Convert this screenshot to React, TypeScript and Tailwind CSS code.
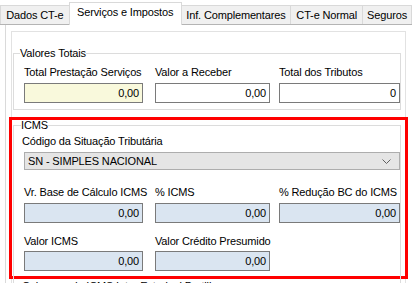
import React from "react";

const font = { fontFamily: '"Liberation Sans", Arial, sans-serif' };

function Tab({ label, active, w }: { label: string; active?: boolean; w: string }) {
  if (active) {
    return (
      <div
        className={`${w} h-[23px] -mb-[1px] -ml-[1px] bg-white border border-b-0 border-[#d9d9d9] pt-[3px] text-center whitespace-nowrap leading-[13px] relative z-10`}
      >
        {label}
      </div>
    );
  }
  return (
    <div
      className={`${w} h-[19px] bg-[#f0f0f0] border border-b-0 border-[#d9d9d9] -ml-[1px] first:ml-0 pt-[3px] text-center whitespace-nowrap leading-[13px]`}
    >
      {label}
    </div>
  );
}

function Field({
  label,
  value,
  bg,
  w,
  labelRight,
  gap = "mt-[4px]",
}: {
  label: string;
  value: string;
  bg: string;
  w: string;
  labelRight?: boolean;
  gap?: string;
}) {
  return (
    <div className={`${w} flex flex-col`}>
      <div className={`h-[13px] leading-[13px] whitespace-nowrap ${labelRight ? "text-right pr-[4px]" : ""}`}>
        {label}
      </div>
      <div
        className={`${gap} h-[20px] border border-[#7a7a7a] ${bg} text-right pr-[3px] leading-[18px]`}
      >
        {value}
      </div>
    </div>
  );
}

export default function App() {
  return (
    <div
      className="w-[412px] h-[283px] overflow-hidden bg-white text-black text-[11px] tracking-[-0.15px] relative"
      style={font}
    >
      {/* tabs */}
      <div className="flex items-end h-[25px] border-b border-[#b4b4b4]">
        <Tab label="Dados CT-e" w="w-[70px]" />
        <Tab label="Serviços e Impostos" active w="w-[113px]" />
        <Tab label="Inf. Complementares" w="w-[111px]" />
        <Tab label="CT-e Normal" w="w-[73px]" />
        <Tab label="Seguros" w="w-[50px]" />
      </div>

      {/* panel */}
      <div className="pl-[5px]">
        <div className="border-l border-[#dadada] pl-[5px] pt-[6px] h-[270px]">
          <div className="w-[395px] h-[300px] border border-[#e2e2e2]">
            {/* Valores Totais */}
            <fieldset className="ml-[1px] mt-[14px] w-[388px] border border-[#dcdcdc] pb-[6px]">
              <legend className="ml-[6px] leading-[14px]">Valores Totais</legend>
              <div className="flex mt-[6px] pl-[10px]">
                <Field label="Total Prestação Serviços" value="0,00" bg="bg-[#f9f9dc]" w="w-[119px]" />
                <div className="w-[12px]" />
                <Field label="Valor a Receber" value="0,00" bg="bg-white" w="w-[115px]" />
                <div className="w-[9px]" />
                <Field label="Total dos Tributos" value="0" bg="bg-white" w="w-[121px]" />
              </div>
            </fieldset>

            {/* ICMS (highlighted) */}
            <div className="-ml-[3px] mt-[7px] w-[399px] h-[162px] border-[3px] border-[#ff0000]">
              <fieldset className="ml-[1px] -mt-[1px] w-[388px] h-[170px] border border-[#dcdcdc]">
                <legend className="ml-[7px] leading-[13px]">ICMS</legend>
                <div className="pl-[10px]">
                  <div className="mt-[3px] -ml-[2px] h-[13px] leading-[13px]">Código da Situação Tributária</div>
                  <div className="mt-[4px] w-[376px] h-[18px] border border-[#adadad] bg-[#e5e5e5] flex items-center pl-[3px] pr-[8px]">
                    <span className="flex-1 leading-[16px]">SN - SIMPLES NACIONAL</span>
                    <svg width="9" height="6" viewBox="0 0 9 6" className="mt-[1px]">
                      <path d="M0.5 0.5 L4.5 4.5 L8.5 0.5" fill="none" stroke="#606060" strokeWidth="1" />
                    </svg>
                  </div>
                  <div className="flex mt-[16px]">
                    <Field label="Vr. Base de Cálculo ICMS" value="0,00" bg="bg-[#dae5f1]" w="w-[119px]" />
                    <div className="w-[12px]" />
                    <Field label="% ICMS" value="0,00" bg="bg-[#dae5f1]" w="w-[115px]" />
                    <div className="w-[9px]" />
                    <Field label="% Redução BC do ICMS" value="0,00" bg="bg-[#dae5f1]" w="w-[121px]" labelRight />
                  </div>
                  <div className="flex mt-[12px]">
                    <Field label="Valor ICMS" value="0,00" bg="bg-[#dae5f1]" w="w-[119px]" gap="mt-[3px]" />
                    <div className="w-[12px]" />
                    <Field label="Valor Crédito Presumido" value="0,00" bg="bg-[#dae5f1]" w="w-[115px]" gap="mt-[3px]" />
                  </div>
                </div>
              </fieldset>
            </div>
            <div className="ml-[10px] mt-[1px] leading-[13px]">Cobrança do ICMS Inter Estadual Partilha</div>
          </div>
        </div>
      </div>
    </div>
  );
}
